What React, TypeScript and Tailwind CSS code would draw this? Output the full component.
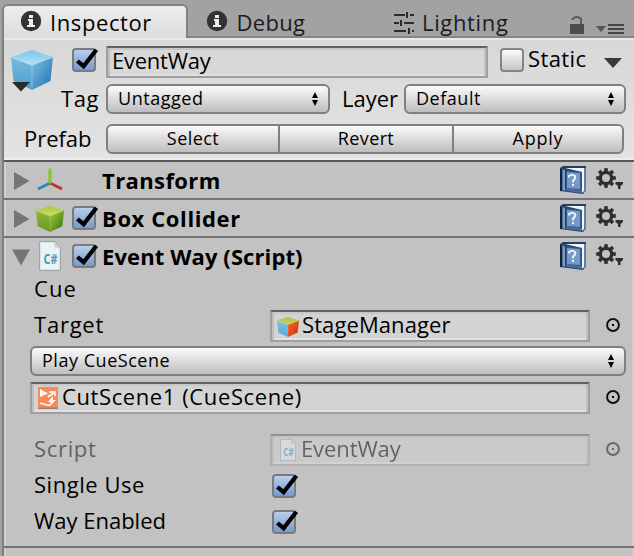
import React from "react";

function InfoIcon({ className = "" }: { className?: string }) {
  return (
    <svg width="22" height="22" viewBox="0 0 22 22" className={`shrink-0 ${className}`}>
      <circle cx="11" cy="11" r="10.2" fill="#333" />
      <path d="M9 5h4v3H9zM8 9h5v6h2v2H7v-2h2v-4H8z" fill="#ededed" />
    </svg>
  );
}

function Check({ className = "" }: { className?: string }) {
  return (
    <span className={`block h-6 w-6 shrink-0 rounded-[4px] border-2 border-[#7b7b7b] bg-linear-to-b from-[#b9cfea] to-[#7699d0] ${className}`}>
      <svg width="28" height="26" viewBox="0 0 28 26" className="-mt-[2px] -ml-[2px] max-w-none overflow-visible">
        <path d="M5.4 13 L11.6 18.2 L24.4 1.8" fill="none" stroke="#000" strokeWidth="4.2" />
      </svg>
    </span>
  );
}

function Popup({ label, tracking, className = "" }: { label: string; tracking: string; className?: string }) {
  return (
    <div className={`flex h-[30px] shrink-0 justify-between rounded-[6px] border-2 border-[#808080] bg-linear-to-b from-[#fbfbfb] to-[#bfbdbd] pr-[9px] pl-[10px] ${className}`}>
      <span className={`-mt-[3px] text-[18px] leading-[30px] ${tracking}`}>{label}</span>
      <svg width="8" height="14" viewBox="0 0 8 14" className="mt-[6px]">
        <path d="M4 0 L7 6 H1z M4 14 L7 8 H1z" fill="#000" />
      </svg>
    </div>
  );
}

function Field({ children, className = "" }: { children: React.ReactNode; className?: string }) {
  return (
    <div className={`flex h-8 shrink-0 border-2 border-[#9f9f9f] border-t-[#626262] bg-[#d3d3d3] shadow-[inset_2px_0_#bdbdbd,inset_-2px_0_#c0c0c0,inset_0_2px_#c8c8c8,inset_0_-2px_#e1e1e1] ${className}`}>
      {children}
    </div>
  );
}

function Picker({ className = "" }: { className?: string }) {
  return (
    <svg width="14" height="14" viewBox="0 0 14 14" className={`ml-4 shrink-0 ${className}`}>
      <circle cx="7" cy="7" r="5.9" fill="none" stroke="#111" strokeWidth="2" />
      <rect x="6" y="6" width="2" height="2" fill="#000" />
    </svg>
  );
}

function Cube({ w, h, top, left, right, className = "" }: { w: number; h: number; top: [string, string]; left: [string, string]; right: [string, string]; className?: string }) {
  const id = `c${w}${left[0].slice(1)}`;
  return (
    <svg width={w} height={h} viewBox="0 0 42 40" preserveAspectRatio="none" className={`shrink-0 ${className}`}>
      <defs>
        {[top, left, right].map((g, i) => (
          <linearGradient key={i} id={`${id}${i}`} x1="0" y1="0" x2={i === 2 ? "1" : "0"} y2="1">
            <stop offset="0" stopColor={g[0]} />
            <stop offset="1" stopColor={g[1]} />
          </linearGradient>
        ))}
      </defs>
      <path d="M0 7 L21 15 V40 L2.5 31z" fill={`url(#${id}1)`} />
      <path d="M42 7 L21 15 V40 L39.5 31z" fill={`url(#${id}2)`} />
      <path d="M21 0 L42 7 L21 15 L0 7z" fill={`url(#${id}0)`} />
      <path d="M0.5 7.5 L21 15.5 L41.5 7.5 M21 15.5 V39" fill="none" stroke="#fff" strokeOpacity=".25" />
    </svg>
  );
}

function ScriptIcon({ w, h, className = "" }: { w: number; h: number; className?: string }) {
  return (
    <svg width={w} height={h} viewBox="0 0 22 30" preserveAspectRatio="none" className={`shrink-0 ${className}`}>
      <path d="M.7 .7 H16 L21.3 6 V29.3 H.7z" fill="#edf2f5" stroke="#909da5" strokeWidth="1" />
      <path d="M15 .7 L16 6.5 L21.3 7z" fill="#c3cdd3" />
      <text x="4.6" y="23" fontSize="14" fontWeight="700" textLength="14" lengthAdjust="spacingAndGlyphs" fill="#4a9cbd">C#</text>
    </svg>
  );
}

function Book() {
  return (
    <svg width="26" height="28" viewBox="0 0 26 28" className="mt-1 shrink-0">
      <path d="M0 2 L3 0 H26 V24 L23 28 L0 25z" fill="#263f63" />
      <path d="M0 3 H2 V25 H0z" fill="#14243e" />
      <path d="M5 2 H24 V25 L22 27 V6z" fill="#f1f7fc" />
      <path d="M24 2 H26 V24 L24 26z" fill="#5a80ac" />
      <path d="M2.5 3 L5 4.5 V25 L2.5 24z" fill="#7d9dc6" />
      <path d="M6 4 L22 6 V27 L6 24z" fill="#355680" />
      <path d="M7 6 L20 7 V23 L7 22z" fill="#7799c8" />
      <path d="M6 22 L22 24 V27 L6 25z" fill="#4a6b98" />
      <path d="M9 11.5 V10 Q12 7.5 15 10 Q16 12.5 13 14.5 V16.5 M13 18 V20" fill="none" stroke="#e8f1fc" strokeWidth="2" />
    </svg>
  );
}

function Gear() {
  return (
    <svg width="28" height="24" viewBox="0 0 28 24" className="mt-[6px] mr-[10px] ml-[10px] shrink-0">
      <g transform="translate(10 10)">
        {[0, 45, 90, 135].map((a) => (
          <rect key={a} x="-1.8" y="-9.8" width="3.6" height="19.6" fill="#2e2e2e" transform={`rotate(${a})`} />
        ))}
        <circle r="7.3" fill="#2e2e2e" />
        <circle r="4" fill="#c2c2c2" />
      </g>
      <path d="M19.5 14 H27 V16 L24.5 18 V21 H22 V18 L19.5 16z" fill="#2e2e2e" />
    </svg>
  );
}

function Foldout({ open = false }: { open?: boolean }) {
  return (
    <svg width="18" height="18" viewBox="0 0 18 18" className="mt-[10px] ml-[8px] shrink-0">
      <path d={open ? "M0 1.5 H18 L9 17.5z" : "M2 0 L17.5 9 L2 18z"} fill="#757575" />
    </svg>
  );
}

function Header({ title, tracking, icon, checked, open, line = true }: { title: string; tracking: string; icon: React.ReactNode; checked?: boolean; open?: boolean; line?: boolean }) {
  return (
    <div className={`flex shrink-0 items-start ${line ? "h-[38px] border-b-2 border-[#747474]" : "h-9"}`}>
      <Foldout open={open} />
      <div className="flex h-9 w-[42px] shrink-0 justify-center pr-[2px]">{icon}</div>
      <div className="w-[30px] shrink-0">{checked && <Check className="mt-[6px]" />}</div>
      <h2 className={`mt-[3px] grow text-[22px] leading-[30px] font-bold ${tracking}`}>{title}</h2>
      <Book />
      <Gear />
    </div>
  );
}

function Row({ label, tracking, children, className = "" }: { label: string; tracking: string; children?: React.ReactNode; className?: string }) {
  return (
    <div className="flex h-9 shrink-0 items-start">
      <span className={`mt-px ml-[28px] w-[236px] shrink-0 ${tracking} ${className}`}>{label}</span>
      {children}
    </div>
  );
}

export default function App() {
  return (
    <div className="flex h-[556px] w-[634px] overflow-hidden bg-[#a2a2a2] font-['Open_Sans','Noto_Sans',sans-serif] text-[22px] leading-[30px] whitespace-nowrap text-black">
      <div className="mt-[38px] w-1 shrink-0 border-r-2 border-[#7e7e7e]" />
      <div className="flex w-[630px] flex-col">
        {/* Tabs */}
        <div className="flex h-[38px] shrink-0 items-start border-b-2 border-[#858585] text-[#1c1c1c]">
          <div className="-ml-[2px] mt-[4px] flex h-[34px] w-[186px] shrink-0 rounded-t-[6px] border-2 border-b-0 border-[#828282] bg-linear-to-b from-[#eeeeee] to-[#dcdcdc] text-black">
            <InfoIcon className="mt-[4px] ml-[16px]" />
            <span className="mt-px ml-[8px] tracking-[0.6px]">Inspector</span>
          </div>
          <InfoIcon className="mt-[10px] ml-[18px]" />
          <span className="mt-[7px] ml-[8.5px] w-[157px] shrink-0 tracking-[0.31px]">Debug</span>
          <svg width="20" height="24" viewBox="0 0 20 24" className="mt-[11px] ml-[0.5px] shrink-0">
            <path d="M0 4h11M16 4h4M0 12h5M10 12h10M0 20h12M18 20h2M13 1v6M7 9v6M15 17v6" stroke="#2b2b2b" strokeWidth="2" fill="none" />
          </svg>
          <span className="mt-[7px] ml-[8px] w-[147px] shrink-0 tracking-[0.66px]">Lighting</span>
          <svg width="16" height="20" viewBox="0 0 16 20" className="mt-[15px] shrink-0">
            <rect x="1" y="9" width="14" height="10" fill="#4c4c4c" />
            <path d="M3.5 5 V4 Q8 0 12 4 V9" fill="none" stroke="#5b5b5b" strokeWidth="2" />
          </svg>
          <svg width="30" height="12" viewBox="0 0 30 12" className="mt-[23px] ml-[10px] shrink-0">
            <path d="M1 3h10L6 9z" fill="#555" />
            <path d="M13 2h16M13 6h16M13 10h16" stroke="#444" strokeWidth="2" />
          </svg>
        </div>

        {/* Object header */}
        <div className="flex h-[124px] shrink-0 flex-col border-t-2 border-b-2 border-t-[#e8e8e8] border-b-[#575757] bg-linear-to-b from-[#d8d8d8] to-[#e3e3e3]">
          <div className="flex">
            <div className="relative h-[78px] w-[57px] shrink-0">
              <Cube w={42} h={40} top={["#7cc4ea", "#b5e2f5"]} left={["#78bce2", "#4a9dcc"]} right={["#77c0e6", "#2270ad"]} className="mt-[10px] ml-[7px]" />
              <svg width="18" height="10" viewBox="0 0 18 10" className="absolute top-[42px] left-[8px]">
                <path d="M0 0h18L9 9.5z" fill="#2a2a2a" />
              </svg>
            </div>
            <div className="flex grow flex-col">
              <div className="flex h-[44px] items-start">
                <Check className="mt-[8px] ml-[11px]" />
                <Field className="mt-[6px] ml-[10px] w-[382px] bg-[#d8d8d8]">
                  <span className="-mt-[3px] ml-[4px] tracking-[-0.25px]">EventWay</span>
                </Field>
                <span className="mt-[8px] ml-3 block h-6 w-6 shrink-0 rounded-[4px] border-2 border-[#858585] bg-linear-to-b from-[#fafafa] to-[#c8c6c6]" />
                <span className="mt-[3px] ml-[4px] w-[75px] shrink-0 tracking-[0.39px]">Static</span>
                <svg width="18" height="10" viewBox="0 0 18 10" className="mt-[18px] ml-px">
                  <path d="M0 0h18L9 10z" fill="#3a3a3a" />
                </svg>
              </div>
              <div className="flex items-start">
                <span className="-mt-px w-[45px] shrink-0 tracking-[0.58px]">Tag</span>
                <Popup label="Untagged" tracking="tracking-[0.54px]" className="w-[224px]" />
                <span className="-mt-px ml-[12px] w-[62px] shrink-0 tracking-[-0.02px]">Layer</span>
                <Popup label="Default" tracking="tracking-[0.53px]" className="w-[222px]" />
              </div>
            </div>
          </div>
          <div className="mt-[6px] flex items-start">
            <span className="-mt-px ml-[20px] w-[82px] shrink-0 tracking-[-0.04px]">Prefab</span>
            <div className="flex h-[30px] w-[518px] rounded-[6px] border-2 border-[#808080] bg-linear-to-b from-[#fbfbfb] to-[#bfbdbd] text-center text-[18px]">
              <span className="-mt-[3px] w-[170px] shrink-0 tracking-[0.45px]">Select</span>
              <span className="h-[26px] w-[176px] shrink-0 border-x-2 border-[#808080]">
                <span className="-mt-[3px] block tracking-[0.37px]">Revert</span>
              </span>
              <span className="-mt-[3px] w-[168px] shrink-0 tracking-[0.76px]">Apply</span>
            </div>
          </div>
          <div className="mt-auto h-[2px] bg-[#ececec]" />
        </div>

        {/* Components */}
        <div className="flex grow flex-col border-x-2 border-l-[#d0d0d0] border-r-[#cdcdcd] bg-[#c2c2c2]">
          <div className="-mx-[2px] flex flex-col">
            <Header
              title="Transform"
              tracking="tracking-[0.4px]"
              icon={
                <svg width="28" height="26" viewBox="0 0 28 26" className="mt-[5px] shrink-0">
                  <path d="M14 16 L2 22" stroke="#2f86bd" strokeWidth="3" />
                  <path d="M14 16 L26 22" stroke="#c8322c" strokeWidth="3" />
                  <path d="M14 1.5 V16.5" stroke="#86c81e" strokeWidth="3" />
                </svg>
              }
            />
            <Header
              title="Box Collider"
              tracking="tracking-[0.6px]"
              checked
              icon={<Cube w={28} h={26} top={["#a6c83c", "#c9e05c"]} left={["#8fb934", "#6d981f"]} right={["#a3cb43", "#33700d"]} className="mt-[6px]" />}
            />
            <Header title="Event Way (Script)" tracking="tracking-[0.1px]" checked open line={false} icon={<ScriptIcon w={22} h={30} className="mt-[3px]" />} />
          </div>

          <div className="-mt-px flex h-[34px] shrink-0 items-start">
            <span className="ml-[28px] tracking-[1.08px]">Cue</span>
          </div>
          <div className="mt-px flex flex-col">
            <Row label="Target" tracking="tracking-[0.77px]">
              <Field className="mt-[2px] w-[320px]">
                <Cube w={22} h={20} top={["#a5c23a", "#c5d76a"]} left={["#83c1e2", "#57a6d2"]} right={["#f56a2a", "#c52f08"]} className="mt-[5px] ml-[5px]" />
                <span className="-mt-[3px] ml-[3px] tracking-[0.09px]">StageManager</span>
              </Field>
              <Picker className="mt-[10px]" />
            </Row>
            <div className="flex h-9 shrink-0">
              <Popup label="Play CueScene" tracking="tracking-[0.53px]" className="mt-[2px] ml-6 w-[596px] border-[#747474]" />
            </div>
            <div className="flex h-9 shrink-0">
              <Field className="mt-[2px] ml-6 w-[560px]">
                <svg width="20" height="22" viewBox="0 0 20 22" className="mt-[3px] ml-[6px] shrink-0">
                  <rect width="20" height="22" fill="#fa8a55" />
                  <rect y="20.5" width="20" height="1.5" fill="#a08070" />
                  <path d="M2 2 L10 6.5 L2 10z" fill="#fff" />
                  <path d="M11 5 H17 V9 M17 5 L10 10 M2 16 L9 18 H12" fill="none" stroke="#fff" strokeWidth="1.6" />
                  <path d="M15 9 L10 15 H13 L11 20 L18 13 H15z" fill="#fff" />
                </svg>
                <span className="-mt-[3px] ml-[4px] tracking-[0.6px]">CutScene1 (CueScene)</span>
              </Field>
              <Picker className="mt-[10px]" />
            </div>
            <div className="h-4" />
            <Row label="Script" tracking="tracking-[0.68px]" className="opacity-50">
              <div className="flex opacity-50">
                <Field className="mt-[2px] w-[320px]">
                  <ScriptIcon w={16} h={22} className="mt-[3px] ml-[8px]" />
                  <span className="-mt-[3px] ml-[5px] tracking-[-0.1px]">EventWay</span>
                </Field>
                <Picker className="mt-[10px]" />
              </div>
            </Row>
            <Row label="Single Use" tracking="tracking-[0.53px]">
              <Check className="mt-[6px] ml-[2px]" />
            </Row>
            <Row label="Way Enabled" tracking="tracking-[-0.01px]">
              <Check className="mt-[6px] ml-[2px]" />
            </Row>
          </div>
          <div className="-mx-[2px] mt-[6px] h-[2px] shrink-0 bg-[#747474]" />
        </div>
      </div>
    </div>
  );
}
